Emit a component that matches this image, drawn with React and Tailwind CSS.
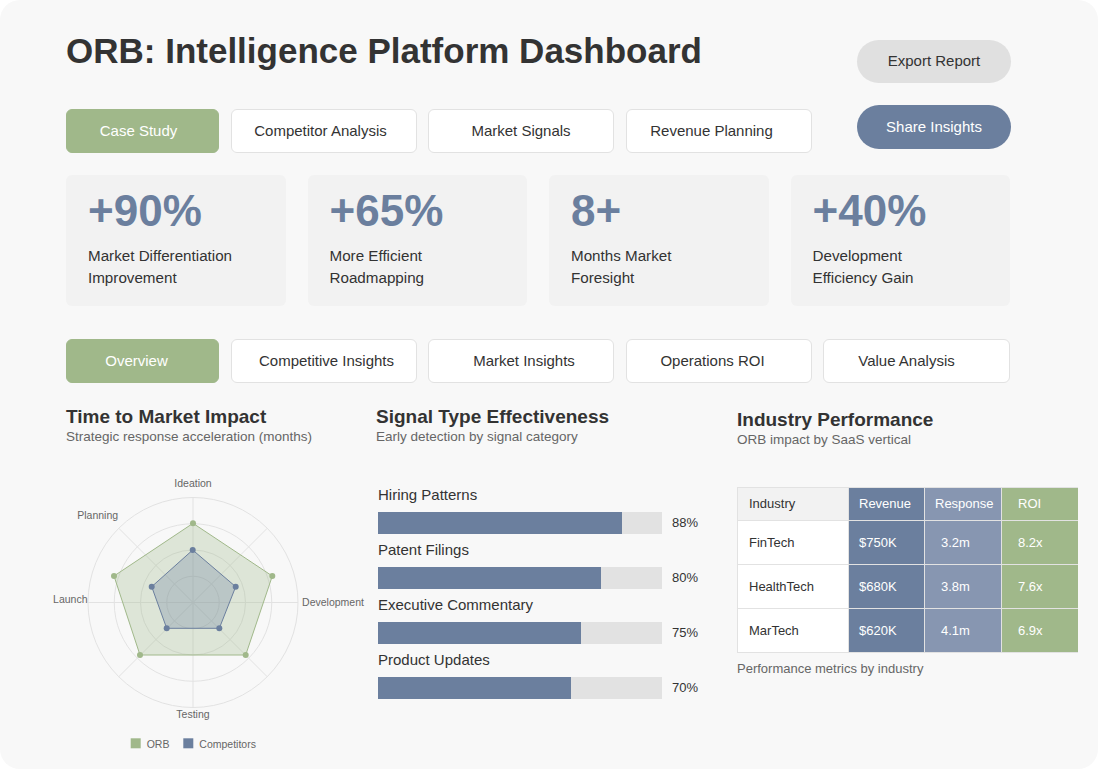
import React from "react";

const GREEN = "#a0b88a";
const BLUE = "#6b7f9e";

function Tab({ label, width, active, shift }) {
  return (
    <div
      className={
        "h-[44px] rounded-[6px] border flex items-center justify-center text-[15px] shrink-0 " +
        shift +
        " " +
        (active
          ? "bg-[#a0b88a] border-[#a0b88a] text-white"
          : "bg-white border-[#e2e2e2] text-[#333333]")
      }
      style={{ width }}
    >
      {label}
    </div>
  );
}

function Stat({ value, line1, line2 }) {
  return (
    <div className="h-[131px] rounded-[6px] bg-[#f2f2f2] pl-[22px] pt-[14px]">
      <div className="text-[44px] font-bold leading-none text-[#6b7f9e]">{value}</div>
      <div className="mt-[12px] text-[15.2px] leading-[22px] text-[#333333]">
        <div>{line1}</div>
        <div>{line2}</div>
      </div>
    </div>
  );
}

function Radar() {
  const cx = 193;
  const cy = 603.5;
  const rings = [26.25, 52.5, 78.75, 105];
  const spokes = [0, 45, 90, 135, 180, 225, 270, 315].map((a) => {
    const r = (a * Math.PI) / 180;
    return [cx + 105 * Math.cos(r), cy + 105 * Math.sin(r)];
  });
  const orb = [
    [193, 524.3],
    [272.3, 577],
    [245.7, 656],
    [140, 656],
    [114, 577],
  ];
  const comp = [
    [192.7, 551],
    [235.7, 587.7],
    [219.3, 629.3],
    [166.7, 629.3],
    [151.7, 587.7],
  ];
  const pts = (a) => a.map((p) => p.join(",")).join(" ");
  const labels = [
    ["Ideation", 193, 484],
    ["Planning", 97.7, 516],
    ["Launch", 70.3, 600],
    ["Development", 333, 603.3],
    ["Testing", 193, 715.7],
  ];
  return (
    <svg
      width="330"
      height="305"
      viewBox="40 455 330 305"
      className="block -ml-[26px] mt-[9px]"
    >
      {rings.map((r) => (
        <circle key={r} cx={cx} cy={cy} r={r} fill="none" stroke="#e2e2e2" strokeWidth="1" />
      ))}
      {spokes.map(([x, y], i) => (
        <line key={i} x1={cx} y1={cy} x2={x} y2={y} stroke="#e2e2e2" strokeWidth="1" />
      ))}
      <polygon points={pts(orb)} fill={GREEN} fillOpacity="0.3" stroke={GREEN} strokeWidth="1" />
      <polygon points={pts(comp)} fill={BLUE} fillOpacity="0.3" stroke={BLUE} strokeWidth="1" />
      {orb.map(([x, y], i) => (
        <circle key={"o" + i} cx={x} cy={y} r="3" fill={GREEN} />
      ))}
      {comp.map(([x, y], i) => (
        <circle key={"c" + i} cx={x} cy={y} r="3" fill={BLUE} />
      ))}
      {labels.map(([t, x, y]) => (
        <text
          key={t}
          x={x}
          y={y + 3.7}
          textAnchor="middle"
          fontSize="10.5"
          fill="#666666"
          fontFamily="'Liberation Sans', Arial, sans-serif"
        >
          {t}
        </text>
      ))}
      <rect x="130.7" y="739.3" width="10" height="10" fill={GREEN} />
      <text x="146.7" y="748.7" fontSize="10.5" fill="#666666" fontFamily="'Liberation Sans', Arial, sans-serif">
        ORB
      </text>
      <rect x="183.3" y="739.3" width="10" height="10" fill={BLUE} />
      <text x="199.3" y="748.7" fontSize="10.5" fill="#666666" fontFamily="'Liberation Sans', Arial, sans-serif">
        Competitors
      </text>
    </svg>
  );
}

function Bar({ label, fill, pct }) {
  return (
    <div className="mb-[7px]">
      <div className="text-[15px] leading-[18px] text-[#333333]">{label}</div>
      <div className="mt-[8px] flex items-center">
        <div className="w-[284px] h-[22px] bg-[#e2e2e2]">
          <div className="h-full bg-[#6b7f9e]" style={{ width: fill }} />
        </div>
        <div className="ml-[10px] text-[13px] text-[#333333]">{pct}</div>
      </div>
    </div>
  );
}

function Cell({ children, cls }) {
  return <div className={"flex items-center text-[13px] " + cls}>{children}</div>;
}

export default function App() {
  const rows = [
    ["FinTech", "$750K", "3.2m", "8.2x"],
    ["HealthTech", "$680K", "3.8m", "7.6x"],
    ["MarTech", "$620K", "4.1m", "6.9x"],
  ];
  return (
    <div className="w-[1098px] h-[769px] bg-white font-['Liberation_Sans',Arial,sans-serif]">
      <div className="w-[1098px] h-[769px] bg-[#f8f8f8] rounded-[20px] overflow-hidden pl-[66px] pt-[33px]">
        {/* Header */}
        <div className="flex justify-between w-[945px]">
          <div>
            <h1 className="text-[35px] font-bold leading-none text-[#333333]">
              ORB: Intelligence Platform Dashboard
            </h1>
            <div className="mt-[41px] flex gap-[11.5px]">
              <Tab label="Case Study" width={153} active shift="pr-[8px]" />
              <Tab label="Competitor Analysis" width={186} shift="pr-[6px]" />
              <Tab label="Market Signals" width={186} shift="" />
              <Tab label="Revenue Planning" width={186} shift="pr-[14px]" />
            </div>
          </div>
          <div className="w-[154px] flex flex-col">
            <div className="mt-[7px] h-[43px] rounded-full bg-[#e0e0e0] flex items-center justify-center text-[15px] text-[#333333]">
              Export Report
            </div>
            <div className="mt-[22px] h-[44px] rounded-full bg-[#6b7f9e] flex items-center justify-center text-[15px] text-white">
              Share Insights
            </div>
          </div>
        </div>

        {/* Stats */}
        <div className="mt-[22px] grid grid-cols-4 gap-[22px] w-[944px]">
          <Stat value="+90%" line1="Market Differentiation" line2="Improvement" />
          <Stat value="+65%" line1="More Efficient" line2="Roadmapping" />
          <Stat value="8+" line1="Months Market" line2="Foresight" />
          <Stat value="+40%" line1="Development" line2="Efficiency Gain" />
        </div>

        {/* Tabs row 2 */}
        <div className="mt-[33px] flex gap-[11.5px]">
          <Tab label="Overview" width={153} active shift="pr-[12px]" />
          <Tab label="Competitive Insights" width={186} shift="pl-[6px]" />
          <Tab label="Market Insights" width={186} shift="pl-[6px]" />
          <Tab label="Operations ROI" width={186} shift="pr-[12px]" />
          <Tab label="Value Analysis" width={187} shift="pr-[20px]" />
        </div>

        {/* Bottom */}
        <div className="mt-[24px] flex">
          <div className="w-[310px] shrink-0">
            <h2 className="text-[19px] font-bold leading-none text-[#333333]">Time to Market Impact</h2>
            <p className="mt-[3px] text-[13.5px] leading-[16px] text-[#666666]">
              Strategic response acceleration (months)
            </p>
            <Radar />
          </div>

          <div className="w-[361px] shrink-0">
            <h2 className="text-[19px] font-bold leading-none text-[#333333]">Signal Type Effectiveness</h2>
            <p className="mt-[3px] text-[13.5px] leading-[16px] text-[#666666]">
              Early detection by signal category
            </p>
            <div className="mt-[41px] pl-[2px]">
              <Bar label="Hiring Patterns" fill="244px" pct="88%" />
              <Bar label="Patent Filings" fill="223px" pct="80%" />
              <Bar label="Executive Commentary" fill="203px" pct="75%" />
              <Bar label="Product Updates" fill="193px" pct="70%" />
            </div>
          </div>

          <div className="w-[342px] shrink-0 pt-[3px]">
            <h2 className="text-[19px] font-bold leading-none text-[#333333]">Industry Performance</h2>
            <p className="mt-[3px] text-[13.5px] leading-[16px] text-[#666666]">ORB impact by SaaS vertical</p>
            <div className="mt-[39px] grid grid-cols-[110px_75px_76px_76px] grid-rows-[32px_43px_43px_43px] gap-px p-px bg-[#e2e2e2] w-[341px]">
              <Cell cls="bg-[#f2f2f2] text-[#333333] pl-[11px]">Industry</Cell>
              <Cell cls="bg-[#6b7f9e] text-white pl-[10px]">Revenue</Cell>
              <Cell cls="bg-[#8796b1] text-white pl-[10px]">Response</Cell>
              <Cell cls="bg-[#a0b88a] text-white pl-[16px]">ROI</Cell>
              {rows.map((r) => (
                <React.Fragment key={r[0]}>
                  <Cell cls="bg-white text-[#333333] pl-[11px]">{r[0]}</Cell>
                  <Cell cls="bg-[#6b7f9e] text-white pl-[10px]">{r[1]}</Cell>
                  <Cell cls="bg-[#8796b1] text-white pl-[16px]">{r[2]}</Cell>
                  <Cell cls="bg-[#a0b88a] text-white pl-[16px]">{r[3]}</Cell>
                </React.Fragment>
              ))}
            </div>
            <p className="mt-[7.5px] text-[13px] leading-[16px] text-[#666666]">Performance metrics by industry</p>
          </div>
        </div>
      </div>
    </div>
  );
}
